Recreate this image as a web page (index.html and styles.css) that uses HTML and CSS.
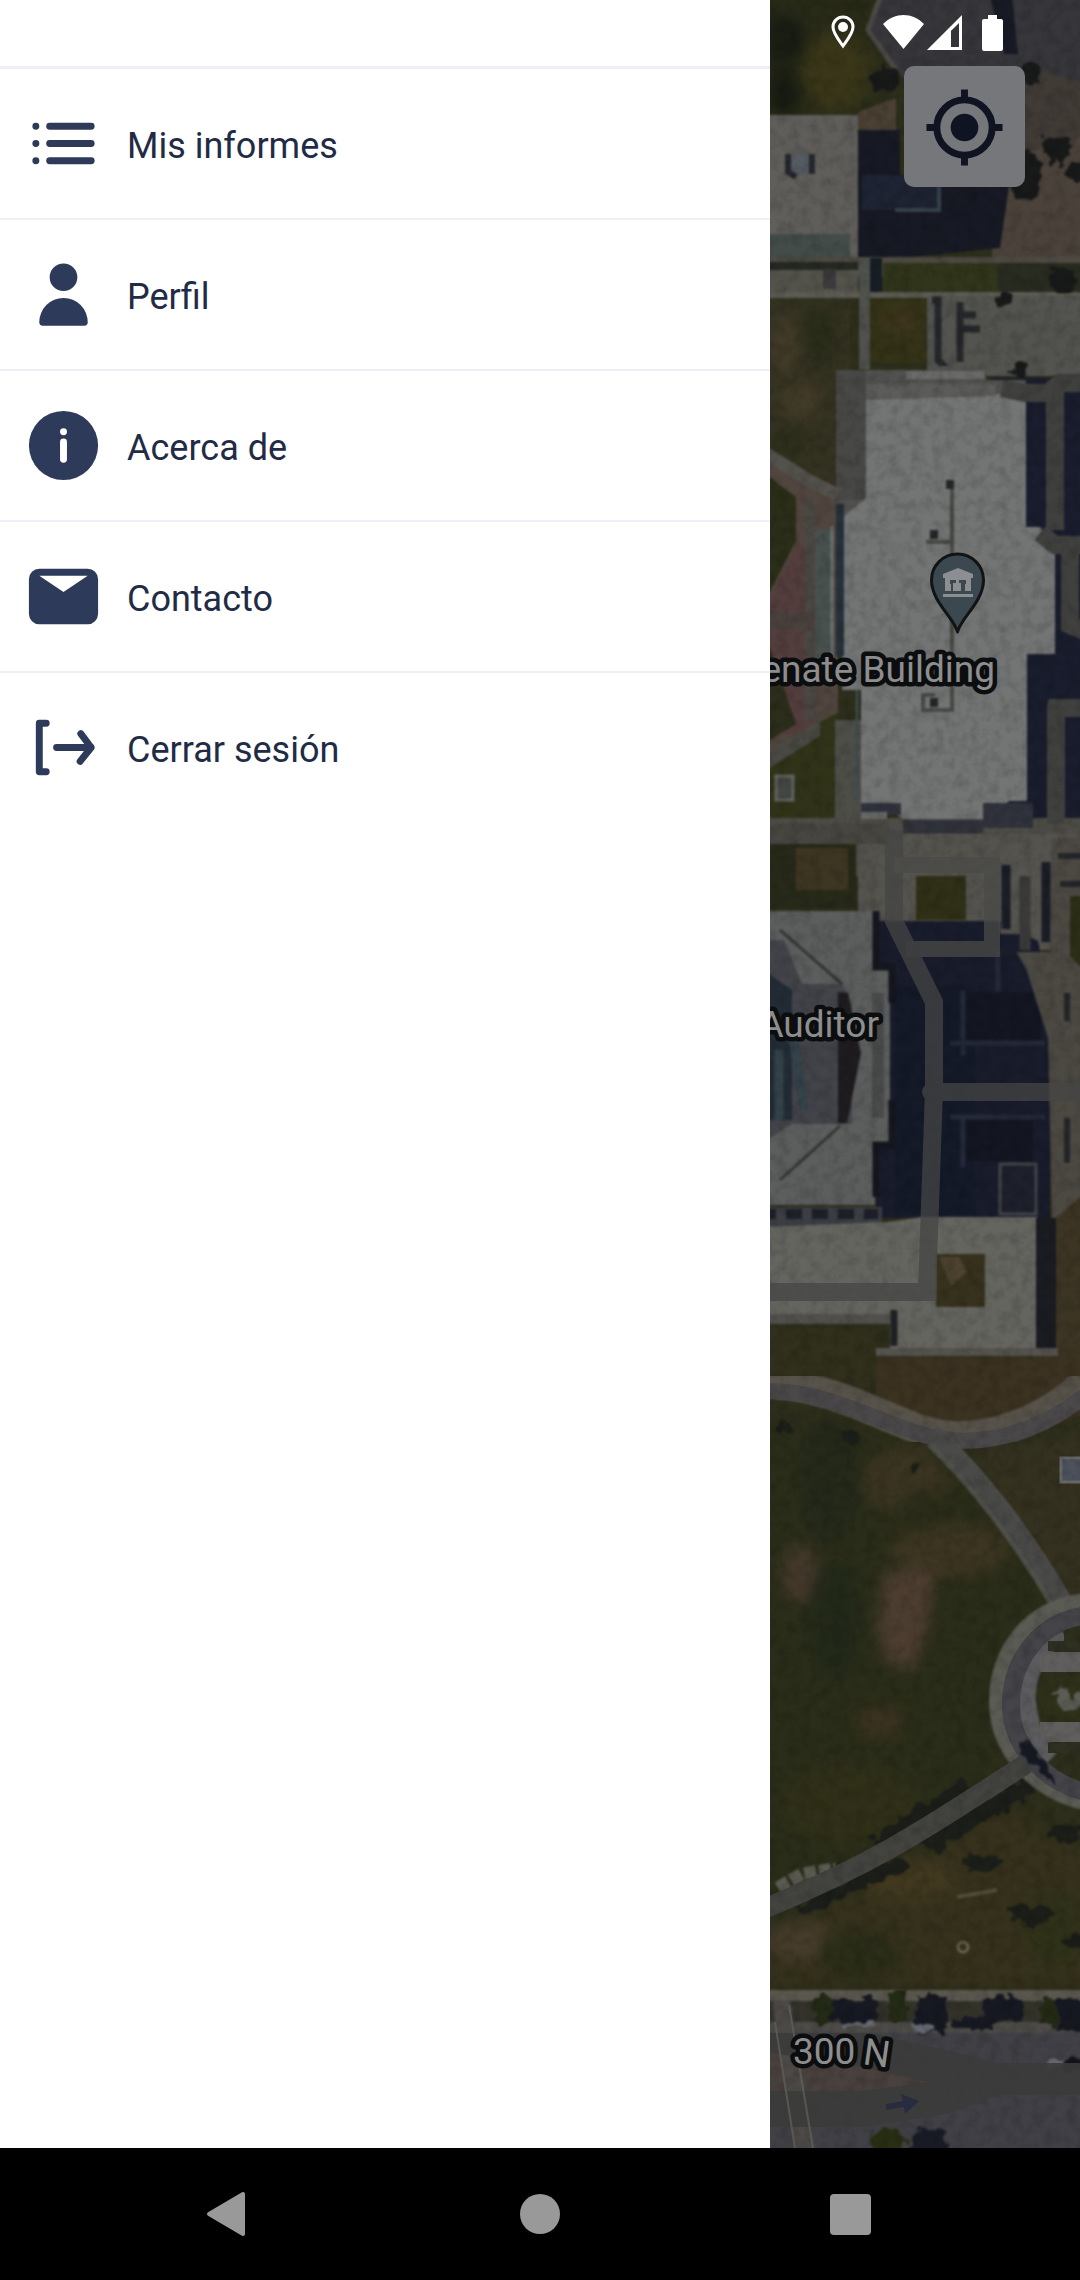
FILE: index.html
```html
<!DOCTYPE html>
<html lang="es">
<head>
<meta charset="utf-8">
<meta name="viewport" content="width=device-width, initial-scale=1">
<title>Menú</title>
<link rel="stylesheet" href="styles.css">
</head>
<body>
<div class="screen">
  <nav class="drawer" aria-label="Menú principal">
    <ul class="menu">
      <li class="menu-row"><a class="menu-link" href="#informes">
        <svg class="icon" viewBox="0 0 24 24" aria-hidden="true"><g fill="none" stroke="currentColor" stroke-width="2" stroke-linecap="round"><path d="M8 7h12M8 12h12M8 17h12M4 7h.01M4 12h.01M4 17h.01"/></g></svg>
        <span class="label">Mis informes</span></a></li>
      <li class="menu-row"><a class="menu-link" href="#perfil">
        <svg class="icon" viewBox="0 0 24 24" aria-hidden="true"><circle cx="12" cy="7" r="4"/><path d="M18 21a1 1 0 0 0 1-1 7 7 0 0 0-14 0 1 1 0 0 0 1 1z"/></svg>
        <span class="label">Perfil</span></a></li>
      <li class="menu-row"><a class="menu-link" href="#acerca">
        <svg class="icon" viewBox="0 0 24 24" aria-hidden="true"><circle cx="12" cy="12" r="10"/><circle cx="12" cy="8" r="1" fill="#fff"/><path d="M12 11v5" stroke="#fff" stroke-width="2" stroke-linecap="round"/></svg>
        <span class="label">Acerca de</span></a></li>
      <li class="menu-row"><a class="menu-link" href="#contacto">
        <svg class="icon" viewBox="0 0 24 24" aria-hidden="true"><path fill-rule="evenodd" d="M5 4h14a3 3 0 0 1 3 3v10a3 3 0 0 1-3 3H5a3 3 0 0 1-3-3V7a3 3 0 0 1 3-3zM5 6l7 4.700L19 6z"/></svg>
        <span class="label">Contacto</span></a></li>
      <li class="menu-row"><a class="menu-link" href="#salir">
        <svg class="icon" viewBox="0 0 24 24" aria-hidden="true"><path d="M7 5H5v14h2M10 12h10M17 8l3 4-3.200 4" fill="none" stroke="currentColor" stroke-width="2" stroke-linecap="round" stroke-linejoin="round"/></svg>
        <span class="label">Cerrar sesión</span></a></li>
    </ul>
  </nav>

  <main class="map">
    <svg class="map-art" viewBox="770 0 310 2148" preserveAspectRatio="xMinYMin slice" role="img" aria-label="Vista de satélite">
      <defs>
        <filter id="soft" x="-10%" y="-10%" width="120%" height="120%" color-interpolation-filters="sRGB"><feGaussianBlur stdDeviation="7"/></filter>
        <filter id="edge" color-interpolation-filters="sRGB"><feGaussianBlur stdDeviation="1"/></filter>
        <filter id="grain" x="0" y="0" width="100%" height="100%" color-interpolation-filters="sRGB">
          <feTurbulence type="fractalNoise" baseFrequency="0.09" numOctaves="3" seed="4"/>
          <feColorMatrix values="0 0 0 0 0  0 0 0 0 0  0 0 0 0 0  1.600 0 0 0 -0.620"/>
        </filter>
        <filter id="foliage" x="-10%" y="-10%" width="120%" height="120%" color-interpolation-filters="sRGB">
          <feTurbulence type="fractalNoise" baseFrequency="0.08" numOctaves="2" seed="9"/>
          <feDisplacementMap in="SourceGraphic" scale="18" xChannelSelector="R" yChannelSelector="G"/>
          <feGaussianBlur stdDeviation="1"/>
        </filter>
      </defs>

      <rect x="770" y="0" width="310" height="2148" fill="#2d2e1b"/>

      <!-- north: trees, plaza and the annex roof -->
      <g filter="url(#soft)">
        <rect x="740" y="-20" width="130" height="136" fill="#292b18"/>
        <ellipse cx="836" cy="72" rx="34" ry="40" fill="#3a3719"/>
        <ellipse cx="784" cy="40" rx="22" ry="26" fill="#191d13"/>
        <ellipse cx="784" cy="92" rx="18" ry="22" fill="#181c12"/>
      </g>
      <g filter="url(#edge)">
        <path d="M881 -9h210v269H1010V150L905 80 868 34z" fill="#37373b"/>
        <path d="M880 -2L868 30 896 70" fill="none" stroke="#4c4a45" stroke-width="5"/>
        <path d="M990 -4h22l6 58h-14z" fill="#181a25"/>
        <path d="M992 160l98-30v130h-98z" fill="#4b433b"/>
        <path d="M1020 65l70 20v50l-70 20z" fill="#413b36"/>
        <path d="M858 112l38-14v40h-38z" fill="#4a4034"/>
        <path d="M858 130h42v50h110l-10 68-100 10h-42z" fill="#171a24"/>
        <path d="M862 175h76v35h-76z" fill="#1e2433"/>
        <path d="M895 210h44v-24" fill="none" stroke="#36424b" stroke-width="4"/>
        <path d="M760 115h98v142h-98z" fill="#5f5e5a"/>
        <path d="M760 234h90v23h-90z" fill="#444c4a"/>
        <path d="M788 154h27v20h-27z" fill="#555b63"/>
        <path d="M788 154v18l8 5M812 154v20" fill="none" stroke="#25272d" stroke-width="6"/>
        <path d="M760 257h330v20H760z" fill="#4d4a42"/>
        <path d="M760 262h98v8h-98z" fill="#252923"/>
        <path d="M760 270h98v22h-98z" fill="#54534b"/>
        <path d="M823 269h13v20h-13z" fill="#3c3b3c"/>
        <path d="M883 263h115v29H883z" fill="#30351b"/>
        <path d="M998 263h92v30h-92z" fill="#292c20"/>
        <path d="M870 258h12v35h-12z" fill="#171e25"/>
        <path d="M760 292h330v6H760z" fill="#5c5b54"/>
        <path d="M760 298h90v240h-90z" fill="#343221"/>
        <path d="M870 299h56v64h-56z" fill="#343318"/>
        <path d="M859 258h11v112h-11z" fill="#50524e"/>
        <path d="M927 296h163v80H927z" fill="#53544f"/>
        <path d="M932 300h6v60l8 8M960 302v60M960 315h16M960 329h20" fill="none" stroke="#25272a" stroke-width="7"/>
      </g>
      <g filter="url(#foliage)" fill="#181a19">
        <circle cx="885" cy="80" r="14"/><circle cx="1030" cy="75" r="11"/><ellipse cx="1025" cy="175" rx="18" ry="24"/>
        <circle cx="1056" cy="150" r="14"/><circle cx="1077" cy="172" r="10"/><circle cx="1004" cy="299" r="8"/>
        <circle cx="1062" cy="280" r="13"/><circle cx="1020" cy="370" r="9"/>
      </g>
      <g filter="url(#soft)">
        <ellipse cx="785" cy="345" rx="14" ry="30" fill="#433b29"/><ellipse cx="820" cy="335" rx="16" ry="28" fill="#292d1a"/>
        <ellipse cx="800" cy="400" rx="22" ry="18" fill="#423b28"/><ellipse cx="790" cy="440" rx="18" ry="14" fill="#2d2f1b"/>
        <ellipse cx="900" cy="322" rx="16" ry="10" fill="#41361f"/>
      </g>

      <!-- Senate Building and its surroundings -->
      <g filter="url(#edge)">
        <path d="M990 378h100v470h-100z" fill="#1a1d2d"/>
        <path d="M836 370h104v-4h46v14h40v46l-190 100z" fill="#51524f"/>
        <path d="M836 370h30v130h-30z" fill="#484946"/>
        <path d="M760 455l46 29 32 14v215l-36 30-42 22z" fill="#51463f"/>
        <path d="M760 470l36 27v44l-36 70z" fill="#2b2e18"/>
        <path d="M796 545h18v190h-30l-24-46V620z" fill="#533e3d"/>
        <path d="M760 620l36 104-36 22z" fill="#2c2d1a"/>
        <path d="M760 757l43-26 34-18v105h-77z" fill="#313319"/>
        <path d="M760 755l60-35v16l-60 38z" fill="#4a4943"/>
        <path d="M760 450l50 31 28 14" fill="none" stroke="#53524c" stroke-width="13"/>
        <path d="M804 500h12v220h-12z" fill="#4b4743"/>
        <path d="M760 612h56v18h-56z" fill="#4a413e"/>
        <path d="M815 530h18v140h-18z" fill="#49514f"/>
        <path d="M835 720h30v120h-30z" fill="#4e4e49"/>
        <path d="M760 818h330v58H760z" fill="#4d4c46"/>
        <path d="M776 776h17v24h-17z" fill="#444844" stroke="#62645e" stroke-width="3"/>
        <path d="M866 397l160-4v134h14l15 20v107h-28v147h-18l-18 18H903l-18-12h-24V690h-19V518l24-20z" fill="#737575"/>
        <path d="M866 384h130v12l-130 4z" fill="#5c5c5a"/>
        <path d="M836 504h8v152h-8z" fill="#263139"/>
        <path d="M832 526v130" stroke="#6b7676" stroke-width="3"/>
        <path d="M857 690v110" stroke="#414d50" stroke-width="3"/>
        <path d="M906 371h78v8h-78z" fill="#6a6b68"/>
        <path d="M952 480v80M952 540v170h-29v-15h12M926 542h26" fill="none" stroke="#484844" stroke-width="4"/>
        <path d="M946 480h8v9h-8zM930 530h8v9h-8zM930 698h8v9h-8z" fill="#242628"/>
        <path d="M861 803h40v12h-40zM983 803h50v25h-50z" fill="#30333c"/>
        <path d="M903 820h80v14h-80z" fill="#31333a"/>
        <path d="M861 812h26v7h-26z" fill="#686a68"/>
        <path d="M1002 388l22 5h24l12-10h30M1055 390v140M1040 533l15 12h35M1070 545v80l20 8M1048 708h42M1056 704v120" fill="none" stroke="#40413f" stroke-width="18"/>
      </g>

      <!-- Capitol roof, courtyard and shadow -->
      <g filter="url(#edge)">
        <path d="M760 844h96v64h-96z" fill="#272a19"/>
        <path d="M796 848h52v42h-52z" fill="#3d3622"/>
        <path d="M858 834h232v116H858z" fill="#54534e"/>
        <path d="M760 824h128v20H760z" fill="#474641"/>
        <path d="M916 876h50v44h-50z" fill="#303018"/>
        <path d="M876 921h122l40 20 12 60v217H876z" fill="#191c2b"/>
        <path d="M895 985h80v230h-80z" fill="#141a28"/>
        <path d="M760 911h115v56h15v178h-15v60H760z" fill="#5c5d5d"/>
        <path d="M762 940h22l18 44h40l10 20v120h-60l-32 20z" fill="#424449"/>
        <path d="M760 968l32 22v130h-32z" fill="#232c36"/>
        <path d="M792 1030l12 80M779 1050v70" stroke="#34424a" stroke-width="9"/>
        <path d="M838 992l10 1 13 60-14 70h-9z" fill="#1f1c20"/>
        <path d="M872 993h12v125h-12z" fill="#4a4a4a"/>
        <path d="M780 930l62 54M780 1180l60-54" stroke="#373737" stroke-width="3"/>
        <path d="M876 911v56h16v36M892 1100v45h-16v52" fill="none" stroke="#15171f" stroke-width="7"/>
        <path d="M963 992h78v50h-78zM963 1119h70v42h-70z" fill="#141622"/>
        <path d="M950 1043h95M950 1117h95M963 990v65M963 1117v50M998 950v42" stroke="#252939" stroke-width="5"/>
        <path d="M1000 850h50v84h-50z" fill="#55544f"/>
        <path d="M1006 865v64M1046 862v80" stroke="#1b1d27" stroke-width="9"/>
        <path d="M1025 876v74" stroke="#3a3a3a" stroke-width="11"/>
        <path d="M1052 838h38v380h-38l-4-180-22-70-10-16h34z" fill="#4c4943"/>
        <path d="M1070 896h20v80l-20-20z" fill="#2c2e17"/>
        <path d="M1058 856h32M1060 884h30M1067 993v28M1067 1118v45" stroke="#24262a" stroke-width="6"/>
        <path d="M1000 1164h36v50h-36z" fill="#1e202c" stroke="#44454a" stroke-width="3"/>
        <path d="M760 1207h122v20H760z" fill="#3c3e44"/>
        <path d="M760 1214h118" stroke="#1e2029" stroke-width="10" stroke-dasharray="16 10"/>
        <path d="M760 1227l127-5 35-5h116v133H890v-34H760z" fill="#656560"/>
        <path d="M760 1314h130v10H760z" fill="#51504c"/>
        <path d="M894 1310v36" stroke="#202124" stroke-width="7"/>
        <path d="M1036 1218h20v132h-20z" fill="#1b1c21"/>
        <path d="M936 1254h49v53h-49z" fill="#37321d"/>
        <path d="M939 1257h20l8 15-16 14z" fill="#4c422e"/>
        <path d="M1056 1218l34-30v190h-34z" fill="#3c3524"/>
        <path d="M760 1328h116v52H760z" fill="#31301c"/>
        <path d="M876 1348h182v8H876z" fill="#55534e"/>
        <path d="M876 1357h214v54l-60 26h-90l-64-40z" fill="#3b3221"/>
      </g>

      <!-- lawn tones -->
      <g filter="url(#soft)">
        <path d="M740 1424l150 20 60 20 110 150-66 60-4 100-30 40-220 105z" fill="#2a2d19"/>
        <ellipse cx="830" cy="1480" rx="30" ry="60" fill="#24291a"/>
        <ellipse cx="905" cy="1480" rx="44" ry="34" fill="#3a3421"/>
        <ellipse cx="950" cy="1550" rx="60" ry="28" fill="#3b3521"/>
        <ellipse cx="925" cy="1510" rx="24" ry="20" fill="#2a2c19"/>
        <ellipse cx="800" cy="1574" rx="19" ry="30" fill="#43382a"/>
        <path d="M885 1572l50-6-6 60-16 46-28-12-8-34z" fill="#4c3d30"/>
        <ellipse cx="880" cy="1722" rx="24" ry="16" fill="#3b3320"/>
        <ellipse cx="835" cy="1620" rx="26" ry="60" fill="#232919"/>
        <ellipse cx="850" cy="1805" rx="70" ry="40" fill="#303019"/>
        <path d="M970 1450l130-20v170l-50-10z" fill="#343120"/>
        <path d="M740 1945l170-75 80-70 110 60v126H740z" fill="#35311c"/>
        <ellipse cx="800" cy="1940" rx="30" ry="20" fill="#463c2b"/>
        <ellipse cx="910" cy="1880" rx="50" ry="22" fill="#40381f"/>
        <ellipse cx="860" cy="1955" rx="40" ry="24" fill="#2a2d18"/>
        <ellipse cx="1055" cy="1930" rx="30" ry="40" fill="#303119"/>
      </g>
      <g filter="url(#foliage)" fill="#1b1e19">
        <ellipse cx="984" cy="1863" rx="22" ry="9"/><ellipse cx="1034" cy="1914" rx="22" ry="11"/><ellipse cx="1066" cy="1834" rx="18" ry="9"/>
        <ellipse cx="1074" cy="1940" rx="12" ry="6"/><circle cx="914" cy="1469" r="5"/><circle cx="786" cy="1426" r="6"/><circle cx="850" cy="1438" r="7"/>
        <path d="M870 1838l90-56 20 8-90 66zM920 1836l110-62 6 18-100 60zM790 1905l110-48 10 12-110 46z"/>
      </g>
      <g fill="none" filter="url(#edge)">
        <path d="M778 1888l24-14 34-5" stroke="#5c5b52" stroke-width="13" stroke-dasharray="12 3"/>
        <path d="M957 1897l40-7" stroke="#565037" stroke-width="4"/>
        <circle cx="963" cy="1947" r="5" stroke="#66614b" stroke-width="3"/>
      </g>

      <!-- walking paths -->
      <g fill="none">
        <path d="M766 1384c60 0 110 30 155 46s115 0 164-48" stroke="#57534a" stroke-width="30" filter="url(#edge)"/>
        <path d="M766 1391c60 0 100 26 155 43s115 0 164-38" stroke="#4a4849" stroke-width="16"/>
        <path d="M935 1438c40 38 90 100 130 172" stroke="#50504b" stroke-width="23" filter="url(#edge)"/>
        <path d="M932 1432c40 38 93 104 134 176" stroke="#4a4a48" stroke-width="16"/>
        <path d="M1090 1602c-60 4-92 50-92 100 0 52 44 92 92 100" stroke="#5a5b53" stroke-width="18" filter="url(#edge)"/>
        <path d="M1060 1628c-26 18-42 50-36 82 4 26 12 40 24 52" stroke="#5c5c5f" stroke-width="26" filter="url(#edge)"/>
        <path d="M1090 1615c-50 4-79 46-79 90 0 44 38 84 90 90" stroke="#444449" stroke-width="18"/>
        <path d="M1040 1662h50M1040 1732h50" stroke="#605f5d" stroke-width="20"/>
        <path d="M1048 1646h42M1048 1748h42" stroke="#2e3022" stroke-width="10"/>
        <path d="M1026 1764c-80 50-130 90-260 144" stroke="#43443f" stroke-width="20"/>
      </g>
      <ellipse cx="1078" cy="1698" rx="40" ry="23" fill="#303119"/>
      <path d="M1052 1694l12-8 8 14 14-10v14l-22 6z" fill="#5b5c55" filter="url(#foliage)"/>
      <path d="M1022 1740l18 14 16 28-16-8-20-22z" fill="#161922" filter="url(#foliage)"/>
      <rect x="1061" y="1458" width="22" height="24" fill="#4d515b" stroke="#656967" stroke-width="3"/>

      <!-- street -->
      <g filter="url(#edge)">
        <rect x="750" y="1990" width="350" height="11" fill="#5a584e"/>
        <rect x="750" y="2001" width="350" height="30" fill="#34332a"/>
        <rect x="750" y="2022" width="350" height="12" fill="#4c4b48"/>
        <rect x="750" y="2033" width="350" height="130" fill="#404046"/>
        <path d="M750 2050h106l80 32-90 12h-96z" fill="#49413d"/>
        <path d="M772 2000h18l26 158h-20z" fill="#4c4946"/>
      </g>
      <g filter="url(#foliage)">
        <path d="M815 1996h20v28h-20zM890 1992h18v30h-18zM1040 1998h16v26h-16z" fill="#232a15"/>
        <path d="M832 2000h46v22h-46zM916 1996h30v36h-30zM982 1998h40v24h-40zM1057 1998h30v32h-30zM952 2018h40v12h-40z" fill="#171922"/>
        <circle cx="888" cy="2145" r="17" fill="#292f14"/><path d="M910 2158v-10q4-30 36-14v24z" fill="#191b26"/>
        <path d="M845 2022h30v6h-30zM910 2024h26v6h-26zM1045 2060h20v9h-20z" fill="#666970"/>
        <path d="M1066 2058h20v10h-20z" fill="#15161d"/>
      </g>

      <rect x="770" y="0" width="310" height="2148" filter="url(#grain)" opacity="0.180"/>

      <!-- road overlays drawn by the map layer -->
      <path d="M770 2033h100l80 18 48 12h82v32h-82l-48 18-85 14H770v-36h92l66-9-90-20-68-9z" fill="#3b3b3b" opacity="0.900"/>
      <path d="M775 2022l20 126M789 2005l24 143" stroke="#63625b" stroke-width="2" opacity="0.700"/>
      <path d="M886 2104l17-3-2-7 18 7-14 13-1-7-18 3z" fill="#282c3e"/>
      <g fill="none" stroke="#454545" stroke-width="18" opacity="0.750">
        <path d="M894 830v91l40 81v88l-7 202H770"/>
        <path d="M894 865h98v84h-86" stroke="#4a4a48" stroke-width="16"/>
        <path d="M931 1092h149" stroke-linecap="round"/>
      </g>

      <path d="M957.500 631c-3-14-26-30-26-52a26 26 0 0 1 52 0c0 22-23 38-26 52z" fill="#3b484f" stroke="#111415" stroke-width="3" stroke-linejoin="round" transform="translate(0 1)"/>
      <path d="M943 574l15-6 15 6v4h-30zM945 578h5v13h-5zM953 583h8v8h-8zM966 578h5v13h-5zM945 578h26v2h-26zM956 578h3v8h-3zM943 594h30v3h-30zM950 584h1v7h-1zM965 584h1v7h-1z" fill="#8d8e91"/>

      <g class="place">
        <text x="995" y="682" text-anchor="end">enate Building</text>
        <text x="879" y="1037" text-anchor="end">Auditor</text>
        <text x="793" y="2064">300</text>
        <text x="862" y="2064" transform="rotate(8 862 2064)">N</text>
      </g>
    </svg>

    <div class="overlay">
      <div class="status">
        <svg class="st-pin" viewBox="0 0 24 34" aria-hidden="true"><path d="M12 2C6.400 2 2 6.400 2 12c0 6 5 12 10 19 5-7 10-13 10-19 0-5.600-4.400-10-10-10z" fill="none" stroke="#fff" stroke-width="3"/><circle cx="12" cy="12" r="5" fill="#fff"/></svg>
        <svg class="st-wifi" viewBox="0 0 41 34" aria-hidden="true"><path d="M0 9C12-3 29-3 41 9L20.500 34z" fill="#fff"/></svg>
        <svg class="st-signal" viewBox="0 0 35 35" aria-hidden="true"><path fill-rule="evenodd" d="M35 0v35H0zM32 8l-8 8v16h8z" fill="#fff"/><path d="M24 16l6-5v20h-6z" fill="#333338"/></svg>
        <svg class="st-battery" viewBox="0 0 21 36" aria-hidden="true"><path d="M6 0h9v4h4q2 0 2 2v28q0 2-2 2H2q-2 0-2-2V6q0-2 2-2h4z" fill="#fff"/></svg>
      </div>
      <button class="locate" type="button" aria-label="Mi ubicación">
        <svg class="icon" viewBox="0 0 24 24" aria-hidden="true"><circle cx="12" cy="12" r="4"/><circle cx="12" cy="12" r="8" fill="none" stroke="currentColor" stroke-width="2"/><path d="M11 1h2v3h-2zM11 20h2v3h-2zM1 11h3v2H1zM20 11h3v2h-3z"/></svg>
      </button>
    </div>
  </main>

  <footer class="system-bar">
    <button class="sys-button" type="button" aria-label="Atrás"><svg class="sys-icon" viewBox="0 0 46 46" aria-hidden="true"><path d="M37 3v40L3 23z" stroke="currentColor" stroke-width="4" stroke-linejoin="round"/></svg></button>
    <button class="sys-button" type="button" aria-label="Inicio"><svg class="sys-icon" viewBox="0 0 46 46" aria-hidden="true"><circle cx="23" cy="23" r="20"/></svg></button>
    <button class="sys-button" type="button" aria-label="Recientes"><svg class="sys-icon" viewBox="0 0 46 46" aria-hidden="true"><rect x="2" y="3" width="41" height="41" rx="4"/></svg></button>
  </footer>
</div>
</body>
</html>
```
FILE: styles.css
```css
* {
  box-sizing: border-box;
}

body {
  margin: 0;
  font-family: Roboto, "Noto Sans", sans-serif;
  background: #000;
}

.screen {
  display: grid;
  grid-template-columns: 77fr 31fr;
  grid-template-rows: 1fr auto;
  min-height: 100vh;
}

.drawer {
  padding-top: 66px;
  background: #fff;
}

.menu {
  margin: 0;
  padding: 0;
  list-style: none;
  border-top: 3px solid #edf0f7;
}

.menu-row + .menu-row {
  border-top: 2px solid #edf0f7;
}

.menu-link {
  display: flex;
  align-items: center;
  gap: 22px;
  height: 149px;
  padding: 0 22px;
  color: #2e3a59;
  text-decoration: none;
}

.icon {
  width: 83px;
  height: 83px;
  fill: currentColor;
}

.label {
  padding-top: 4px;
  font-size: 36px;
  line-height: 44px;
  color: #222b45;
}

.map {
  position: relative;
  overflow: hidden;
  background: #2d2e1b;
}

.map-art {
  position: absolute;
  inset: 0;
  width: 100%;
  height: 100%;
}

.place {
  font-size: 37px;
  fill: #8e8e8e;
  stroke: #0c0d0e;
  stroke-width: 9px;
  stroke-linejoin: round;
  paint-order: stroke;
}

.overlay {
  position: relative;
  display: flex;
  flex-direction: column;
  align-items: flex-end;
}

.status {
  display: flex;
  align-items: flex-start;
  height: 66px;
  padding: 15px 77px 0 0;
}

.st-pin {
  width: 24px;
  height: 34px;
  margin-right: 28px;
}

.st-wifi {
  width: 41px;
  height: 34px;
  margin-right: 3px;
}

.st-signal {
  width: 35px;
  height: 35px;
  margin-right: 20px;
}

.st-battery {
  width: 21px;
  height: 36px;
}

.locate {
  display: grid;
  place-items: center;
  width: 121px;
  height: 121px;
  margin-right: 55px;
  padding: 2px 0 0;
  border: 0;
  border-radius: 10px;
  background: #76777b;
  color: #101422;
}

.system-bar {
  grid-column: 1 / -1;
  display: grid;
  grid-template-columns: repeat(3, 1fr);
  height: 132px;
  padding: 0 73px;
  background: #000;
}

.sys-button {
  display: grid;
  place-items: center;
  padding: 0;
  border: 0;
  background: none;
  color: #999;
}

.sys-icon {
  width: 46px;
  height: 46px;
  fill: currentColor;
}
```
